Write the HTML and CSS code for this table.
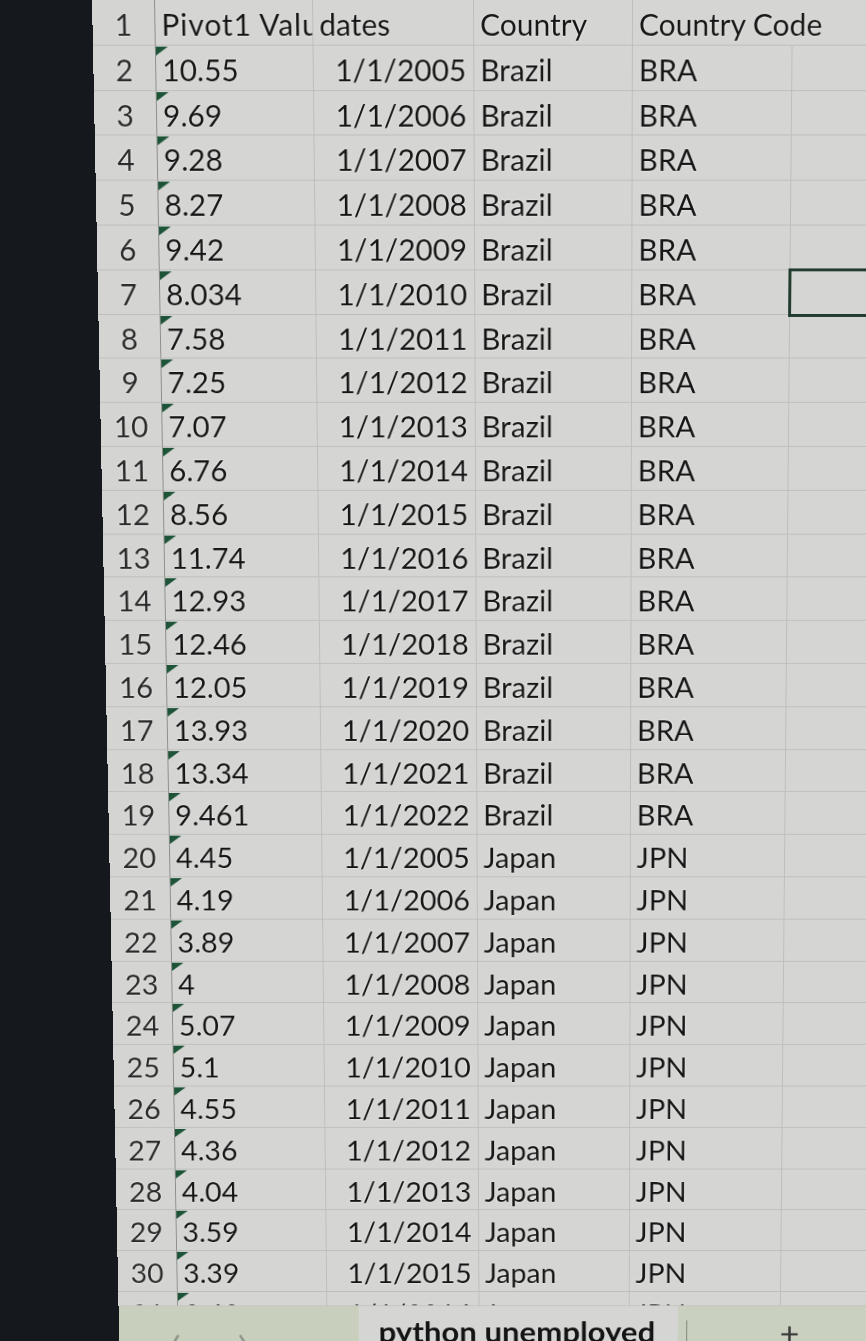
FILE: index.html
```html
<!DOCTYPE html>
<html lang="en">
<head>
    <meta charset="UTF-8">
    <meta name="viewport" content="width=device-width, initial-scale=1.0">
    <title>python unemployed</title>
    <link rel="stylesheet" href="styles.css">
</head>
<body>

<div class="sheet">
    <div class="grid">
        <div class="row"><div class="num">1</div><div class="cell wide">Pivot1 Value</div><div class="cell">dates</div><div class="cell">Country</div><div class="cell spill">Country Code</div><div class="cell"></div></div>
        <div class="row"><div class="num">2</div><div class="cell val">10.55</div><div class="cell date">1/1/2005</div><div class="cell">Brazil</div><div class="cell">BRA</div><div class="cell"></div></div>
        <div class="row"><div class="num">3</div><div class="cell val">9.69</div><div class="cell date">1/1/2006</div><div class="cell">Brazil</div><div class="cell">BRA</div><div class="cell"></div></div>
        <div class="row"><div class="num">4</div><div class="cell val">9.28</div><div class="cell date">1/1/2007</div><div class="cell">Brazil</div><div class="cell">BRA</div><div class="cell"></div></div>
        <div class="row"><div class="num">5</div><div class="cell val">8.27</div><div class="cell date">1/1/2008</div><div class="cell">Brazil</div><div class="cell">BRA</div><div class="cell"></div></div>
        <div class="row"><div class="num">6</div><div class="cell val">9.42</div><div class="cell date">1/1/2009</div><div class="cell">Brazil</div><div class="cell">BRA</div><div class="cell"></div></div>
        <div class="row"><div class="num">7</div><div class="cell val">8.034</div><div class="cell date">1/1/2010</div><div class="cell">Brazil</div><div class="cell">BRA</div><div class="cell selected"></div></div>
        <div class="row"><div class="num">8</div><div class="cell val">7.58</div><div class="cell date">1/1/2011</div><div class="cell">Brazil</div><div class="cell">BRA</div><div class="cell"></div></div>
        <div class="row"><div class="num">9</div><div class="cell val">7.25</div><div class="cell date">1/1/2012</div><div class="cell">Brazil</div><div class="cell">BRA</div><div class="cell"></div></div>
        <div class="row"><div class="num">10</div><div class="cell val">7.07</div><div class="cell date">1/1/2013</div><div class="cell">Brazil</div><div class="cell">BRA</div><div class="cell"></div></div>
        <div class="row"><div class="num">11</div><div class="cell val">6.76</div><div class="cell date">1/1/2014</div><div class="cell">Brazil</div><div class="cell">BRA</div><div class="cell"></div></div>
        <div class="row"><div class="num">12</div><div class="cell val">8.56</div><div class="cell date">1/1/2015</div><div class="cell">Brazil</div><div class="cell">BRA</div><div class="cell"></div></div>
        <div class="row"><div class="num">13</div><div class="cell val">11.74</div><div class="cell date">1/1/2016</div><div class="cell">Brazil</div><div class="cell">BRA</div><div class="cell"></div></div>
        <div class="row"><div class="num">14</div><div class="cell val">12.93</div><div class="cell date">1/1/2017</div><div class="cell">Brazil</div><div class="cell">BRA</div><div class="cell"></div></div>
        <div class="row"><div class="num">15</div><div class="cell val">12.46</div><div class="cell date">1/1/2018</div><div class="cell">Brazil</div><div class="cell">BRA</div><div class="cell"></div></div>
        <div class="row"><div class="num">16</div><div class="cell val">12.05</div><div class="cell date">1/1/2019</div><div class="cell">Brazil</div><div class="cell">BRA</div><div class="cell"></div></div>
        <div class="row"><div class="num">17</div><div class="cell val">13.93</div><div class="cell date">1/1/2020</div><div class="cell">Brazil</div><div class="cell">BRA</div><div class="cell"></div></div>
        <div class="row"><div class="num">18</div><div class="cell val">13.34</div><div class="cell date">1/1/2021</div><div class="cell">Brazil</div><div class="cell">BRA</div><div class="cell"></div></div>
        <div class="row"><div class="num">19</div><div class="cell val">9.461</div><div class="cell date">1/1/2022</div><div class="cell">Brazil</div><div class="cell">BRA</div><div class="cell"></div></div>
        <div class="row"><div class="num">20</div><div class="cell val">4.45</div><div class="cell date">1/1/2005</div><div class="cell">Japan</div><div class="cell">JPN</div><div class="cell"></div></div>
        <div class="row"><div class="num">21</div><div class="cell val">4.19</div><div class="cell date">1/1/2006</div><div class="cell">Japan</div><div class="cell">JPN</div><div class="cell"></div></div>
        <div class="row"><div class="num">22</div><div class="cell val">3.89</div><div class="cell date">1/1/2007</div><div class="cell">Japan</div><div class="cell">JPN</div><div class="cell"></div></div>
        <div class="row"><div class="num">23</div><div class="cell val">4</div><div class="cell date">1/1/2008</div><div class="cell">Japan</div><div class="cell">JPN</div><div class="cell"></div></div>
        <div class="row"><div class="num">24</div><div class="cell val">5.07</div><div class="cell date">1/1/2009</div><div class="cell">Japan</div><div class="cell">JPN</div><div class="cell"></div></div>
        <div class="row"><div class="num">25</div><div class="cell val">5.1</div><div class="cell date">1/1/2010</div><div class="cell">Japan</div><div class="cell">JPN</div><div class="cell"></div></div>
        <div class="row"><div class="num">26</div><div class="cell val">4.55</div><div class="cell date">1/1/2011</div><div class="cell">Japan</div><div class="cell">JPN</div><div class="cell"></div></div>
        <div class="row"><div class="num">27</div><div class="cell val">4.36</div><div class="cell date">1/1/2012</div><div class="cell">Japan</div><div class="cell">JPN</div><div class="cell"></div></div>
        <div class="row"><div class="num">28</div><div class="cell val">4.04</div><div class="cell date">1/1/2013</div><div class="cell">Japan</div><div class="cell">JPN</div><div class="cell"></div></div>
        <div class="row"><div class="num">29</div><div class="cell val">3.59</div><div class="cell date">1/1/2014</div><div class="cell">Japan</div><div class="cell">JPN</div><div class="cell"></div></div>
        <div class="row"><div class="num">30</div><div class="cell val">3.39</div><div class="cell date">1/1/2015</div><div class="cell">Japan</div><div class="cell">JPN</div><div class="cell"></div></div>
        <div class="row last"><div class="num">31</div><div class="cell val">3.42</div><div class="cell date">1/1/2016</div><div class="cell">Japan</div><div class="cell">JPN</div><div class="cell"></div></div>
    </div>

    <div class="tabs">
        <div class="tab-nav"><span class="arrow">&lsaquo;</span><span class="arrow">&rsaquo;</span></div>
        <div class="tab active">python unemployed</div>
        <div class="tab-rest"><span class="sep"></span><span class="add">+</span></div>
    </div>
</div>

</body>
</html>
```

FILE: styles.css
```css
body {
    margin: 0;
    height: 1341px;
    overflow: hidden;
    background-color: #15181d;
    font-family: Lato, "Open Sans", sans-serif;
}

/* the whole sheet is tilted a little, like the photo of the monitor */
.sheet {
    margin-left: 92px;
    width: 880px;
    background-color: #d5d5d3;
    transform-origin: 481px 0;
    transform: perspective(2490px) rotateX(-6deg);
}

.row {
    display: grid;
    grid-template-columns: 63px 158px 161px 159px 160px 1fr;
    height: 45.8px;
}
.row.last {
    height: 14.7px;
    overflow: hidden;
}

.num,
.cell {
    box-sizing: border-box;
    height: 45.8px;
    line-height: 48px;
    font-size: 30px;
    color: #151515;
    text-shadow: 0 0 1px #fff, 0 0 2px #f2f2f2;
    border-bottom: 1px solid #bebebc;
    white-space: nowrap;
    overflow: hidden;
}
.num {
    text-align: center;
    color: #2a2a2a;
    background-color: #d4d4d2;
    border-right: 1px solid #8e8e8c;
}
.cell {
    position: relative;
    padding: 0 7px 0 6px;
    border-right: 1px solid #bebebc;
}
.cell.wide {
    letter-spacing: 0.9px;
}
.cell.date {
    text-align: right;
}
.cell.spill {
    overflow: visible;
    border-right-color: transparent;
}

/* green "number stored as text" marker */
.cell.val::before {
    content: '';
    position: absolute;
    left: 0;
    top: 1px;
    border-top: 9px solid #1d5438;
    border-right: 12px solid transparent;
}

.cell.selected {
    overflow: visible;
    z-index: 1;
    outline: 3px solid #213b2d;
    outline-offset: -1px;
}

.tabs {
    display: flex;
    height: 70px;
    border-top: 1px solid #c4c4c2;
}
.tab-nav {
    width: 254px;
    display: flex;
    gap: 58px;
    padding-left: 54px;
    box-sizing: border-box;
    background-color: #c8cfbd;
}
.arrow {
    font-size: 44px;
    line-height: 1;
    padding-top: 14px;
    color: #8f958a;
}
.tab {
    width: 338px;
    box-sizing: border-box;
    padding: 12px 0 0 21px;
    font-size: 33px;
    font-weight: bold;
    line-height: 1;
    color: #141414;
    background-color: #d5d5d3;
    text-shadow: 0 0 1px #fff;
}
.tab-rest {
    flex: 1;
    display: flex;
    align-items: flex-start;
    background-color: #c9d0bf;
}
.sep {
    width: 1px;
    height: 40px;
    margin: 16px 0 0 9px;
    background-color: #7d8379;
}
.add {
    margin-left: 98px;
    padding-top: 12px;
    font-size: 36px;
    line-height: 1;
    color: #3a3a3a;
}
```
